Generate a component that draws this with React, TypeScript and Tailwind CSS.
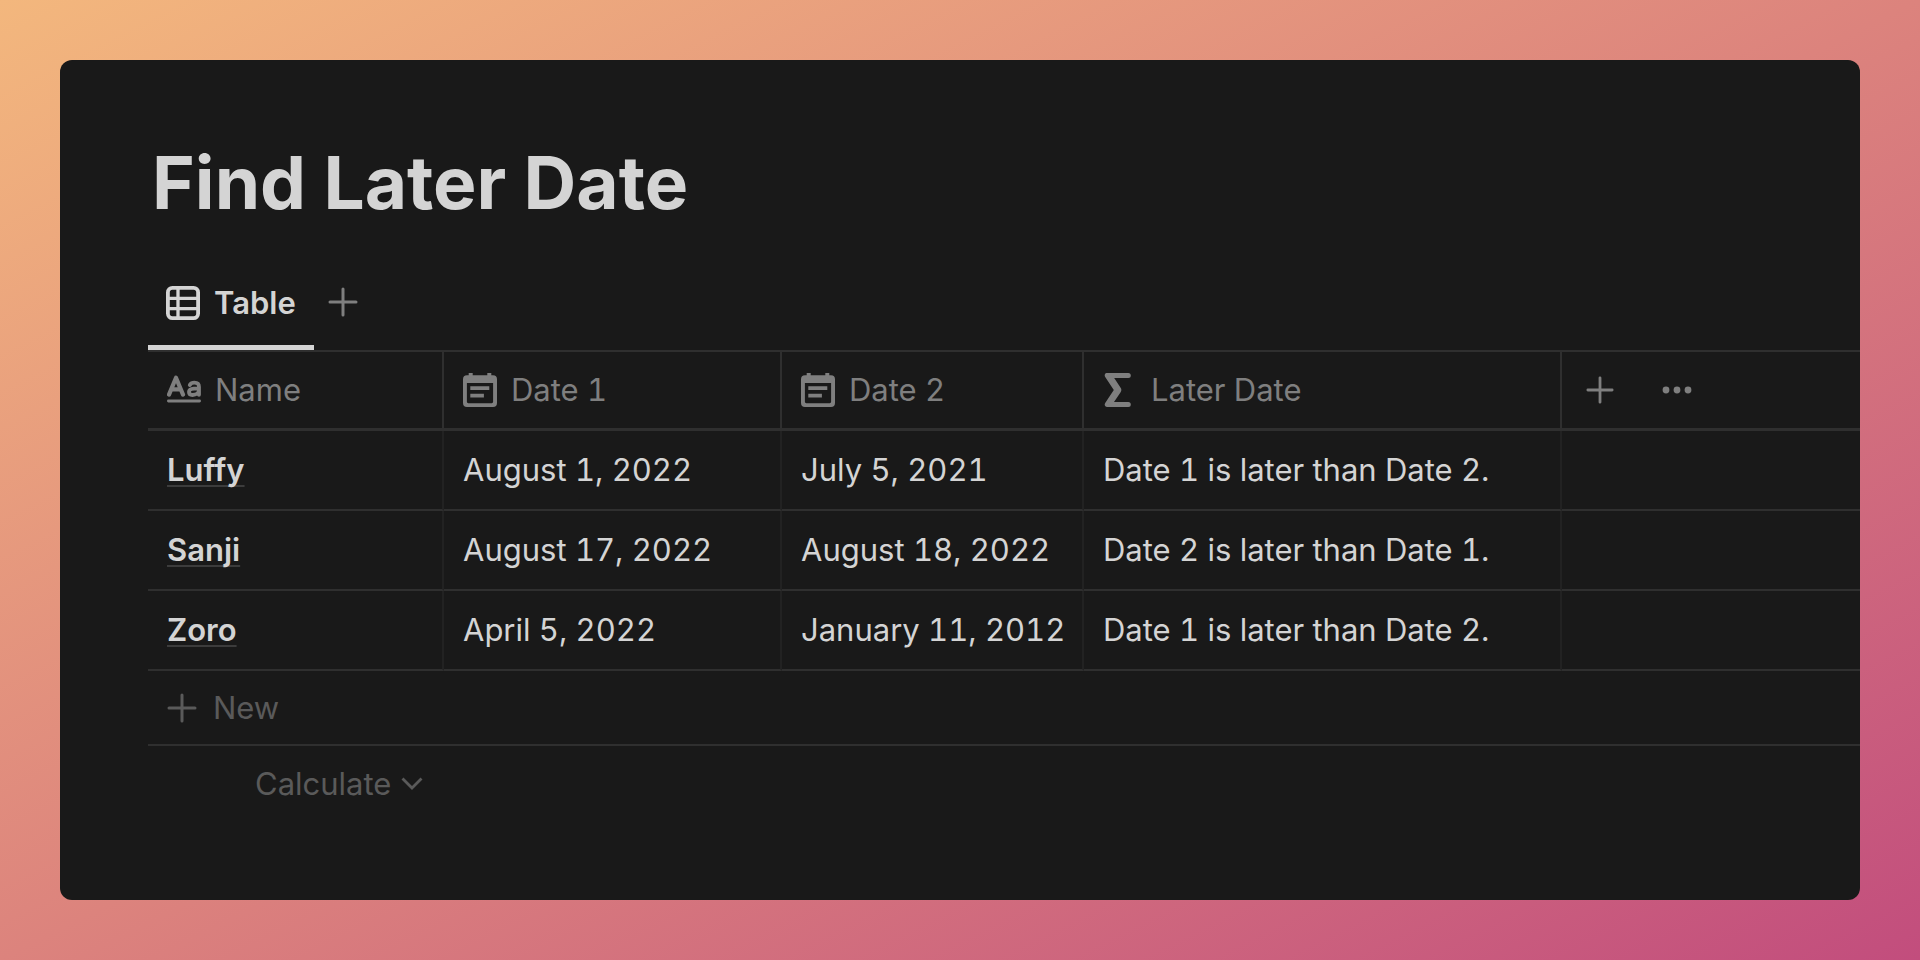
import type { ReactNode } from "react";

type Row = { name: string; date1: string; date2: string; later: string };

const rows: Row[] = [
  { name: "Luffy", date1: "August 1, 2022", date2: "July 5, 2021", later: "Date 1 is later than Date 2." },
  { name: "Sanji", date1: "August 17, 2022", date2: "August 18, 2022", later: "Date 2 is later than Date 1." },
  { name: "Zoro", date1: "April 5, 2022", date2: "January 11, 2012", later: "Date 1 is later than Date 2." },
];

function TableIcon() {
  return (
    <svg width="34" height="34" viewBox="0 0 34 34" fill="none" stroke="currentColor" strokeWidth="3.8" aria-hidden="true">
      <rect x="1.9" y="1.9" width="30.2" height="30.2" rx="4.5" />
      <path d="M2 12.3h30M2 22.6h30M12 2v30" strokeWidth="3.3" />
    </svg>
  );
}

function PlusIcon({ size }: { size: number }) {
  return (
    <svg width={size} height={size} viewBox="0 0 30 30" fill="none" stroke="currentColor" strokeWidth="3" strokeLinecap="round" aria-hidden="true">
      <path d="M15 2v26M2 15h26" />
    </svg>
  );
}

function TitleIcon() {
  return (
    <svg width="34" height="34" viewBox="0 0 34 34" fill="none" stroke="currentColor" strokeLinecap="round" strokeLinejoin="round" aria-hidden="true">
      <path d="M2 21.6 9 4.8 16 21.6M4.6 16.400h8.800" strokeWidth="4.2" />
      <path d="M22.800 12c1-1.700 2.800-2.300 4.600-2.300 3 0 4.600 1.500 4.600 4.300v7.800M32 15.400c-6.600-.2-10 .7-10 3.600 0 1.900 1.500 3 3.500 3 3.400 0 6.500-2 6.500-5.200" strokeWidth="3.800" />
      <path d="M1.400 28h31.200" strokeWidth="2.800" />
    </svg>
  );
}

function DateIcon() {
  return (
    <svg width="34" height="34" viewBox="0 0 34 34" fill="currentColor" aria-hidden="true">
      <path
        fillRule="evenodd"
        d="M5.7 0h4v2.3h14.6V0h4v2.3H30a4 4 0 0 1 4 4V30a4 4 0 0 1-4 4H4a4 4 0 0 1-4-4V6.300a4 4 0 0 1 4-4h1.700zM3.900 10v18.800a1.400 1.400 0 0 0 1.400 1.400h23.400a1.400 1.400 0 0 0 1.400-1.400V10z"
      />
      <path d="M7.300 13.200h19v3.800h-19zM7.300 20.700h13.600v3.800H7.300z" />
    </svg>
  );
}

function SumIcon() {
  return (
    <svg width="34" height="34" viewBox="0 0 34 34" fill="currentColor" aria-hidden="true">
      <path d="M4 0h21.300a2.500 2.500 0 0 1 0 5H11.200l6.400 9.800c1 1.500 1 2.900 0 4.400L11 29h14.300a2.500 2.500 0 0 1 0 5H4c-2 0-2.900-2.200-1.800-3.900L10.800 17 2.200 3.900C1.100 2.200 2 0 4 0z" />
    </svg>
  );
}

function DotsIcon() {
  return (
    <svg width="30" height="8" viewBox="0 0 30 8" fill="currentColor" aria-hidden="true">
      <circle cx="4" cy="4" r="3.4" />
      <circle cx="15" cy="4" r="3.4" />
      <circle cx="26" cy="4" r="3.4" />
    </svg>
  );
}

function ChevronIcon() {
  return (
    <svg width="22" height="14" viewBox="0 0 22 14" fill="none" stroke="currentColor" strokeWidth="2.8" aria-hidden="true">
      <path d="m1.5 1.5 9.5 9.5 9.5-9.5" />
    </svg>
  );
}

function HeadCell({ icon, label }: { icon: ReactNode; label: string }) {
  return (
    <th scope="col" className="h-[79px] border-r-2 border-b-3 border-[#2f2f2f] p-0 pl-[19px] text-left font-normal">
      <span className="flex items-center gap-3.5">
        {icon}
        {label}
      </span>
    </th>
  );
}

export default function App() {
  return (
    <main className="flex min-h-screen flex-col bg-linear-to-br from-[#f3b77d] via-[#dc837d] to-[#c24d7d] p-[60px] font-[Inter,sans-serif] text-[#d4d4d4]">
      <section className="flex-1 rounded-xl bg-[#191919] pt-[79px] pl-[88px]">
        <h1 className="pl-1 text-[73px] leading-[88px] font-bold">Find Later Date</h1>

        <div className="mt-[41px] flex items-stretch">
          <button type="button" className="flex h-[82px] items-center gap-3.5 border-b-5 border-[#d4d4d4] px-[18px] pb-2 text-[31px] leading-10 font-semibold">
            <TableIcon />
            Table
          </button>
          <button type="button" aria-label="Add view" className="ml-3.5 pb-3.5 text-[#7f7f7f]">
            <PlusIcon size={30} />
          </button>
        </div>

        <table className="w-full table-fixed border-separate border-spacing-0 border-t-2 border-[#2f2f2f] text-[31px] leading-10 tabular-nums">
          <colgroup>
            <col className="w-[296px]" />
            <col className="w-[338px]" />
            <col className="w-[302px]" />
            <col className="w-[478px]" />
            <col />
          </colgroup>
          <thead className="text-[#7f7f7f]">
            <tr>
              <HeadCell icon={<TitleIcon />} label="Name" />
              <HeadCell icon={<DateIcon />} label="Date 1" />
              <HeadCell icon={<DateIcon />} label="Date 2" />
              <HeadCell icon={<SumIcon />} label="Later Date" />
              <td className="border-b-3 border-[#2f2f2f] p-0 pl-6">
                <span className="flex items-center gap-12">
                  <button type="button" aria-label="Add property">
                    <PlusIcon size={28} />
                  </button>
                  <button type="button" aria-label="More options">
                    <DotsIcon />
                  </button>
                </span>
              </td>
            </tr>
          </thead>
          <tbody>
            {rows.map((row) => (
              <tr key={row.name} className="*:h-20 *:border-b-2 *:border-b-[#2f2f2f] *:p-0 *:pl-[19px] *:whitespace-nowrap *:not-last:border-r-2 *:not-last:border-r-[#222222]">
                <th scope="row" className="text-left font-semibold">
                  <a href="#" className="underline decoration-[#3c3c3c] decoration-2 underline-offset-4 [text-decoration-skip-ink:none]">
                    {row.name}
                  </a>
                </th>
                <td>{row.date1}</td>
                <td>{row.date2}</td>
                <td>{row.later}</td>
                <td />
              </tr>
            ))}
          </tbody>
        </table>

        <button type="button" className="flex h-[75px] w-full items-center gap-4 border-b-2 border-[#2f2f2f] pl-[19px] text-[31px] leading-10 text-[#5a5a5a]">
          <PlusIcon size={30} />
          New
        </button>
        <button type="button" className="ml-[107px] flex h-[75px] items-center gap-2.5 text-[31px] leading-10 text-[#5a5a5a]">
          Calculate
          <ChevronIcon />
        </button>
      </section>
    </main>
  );
}
